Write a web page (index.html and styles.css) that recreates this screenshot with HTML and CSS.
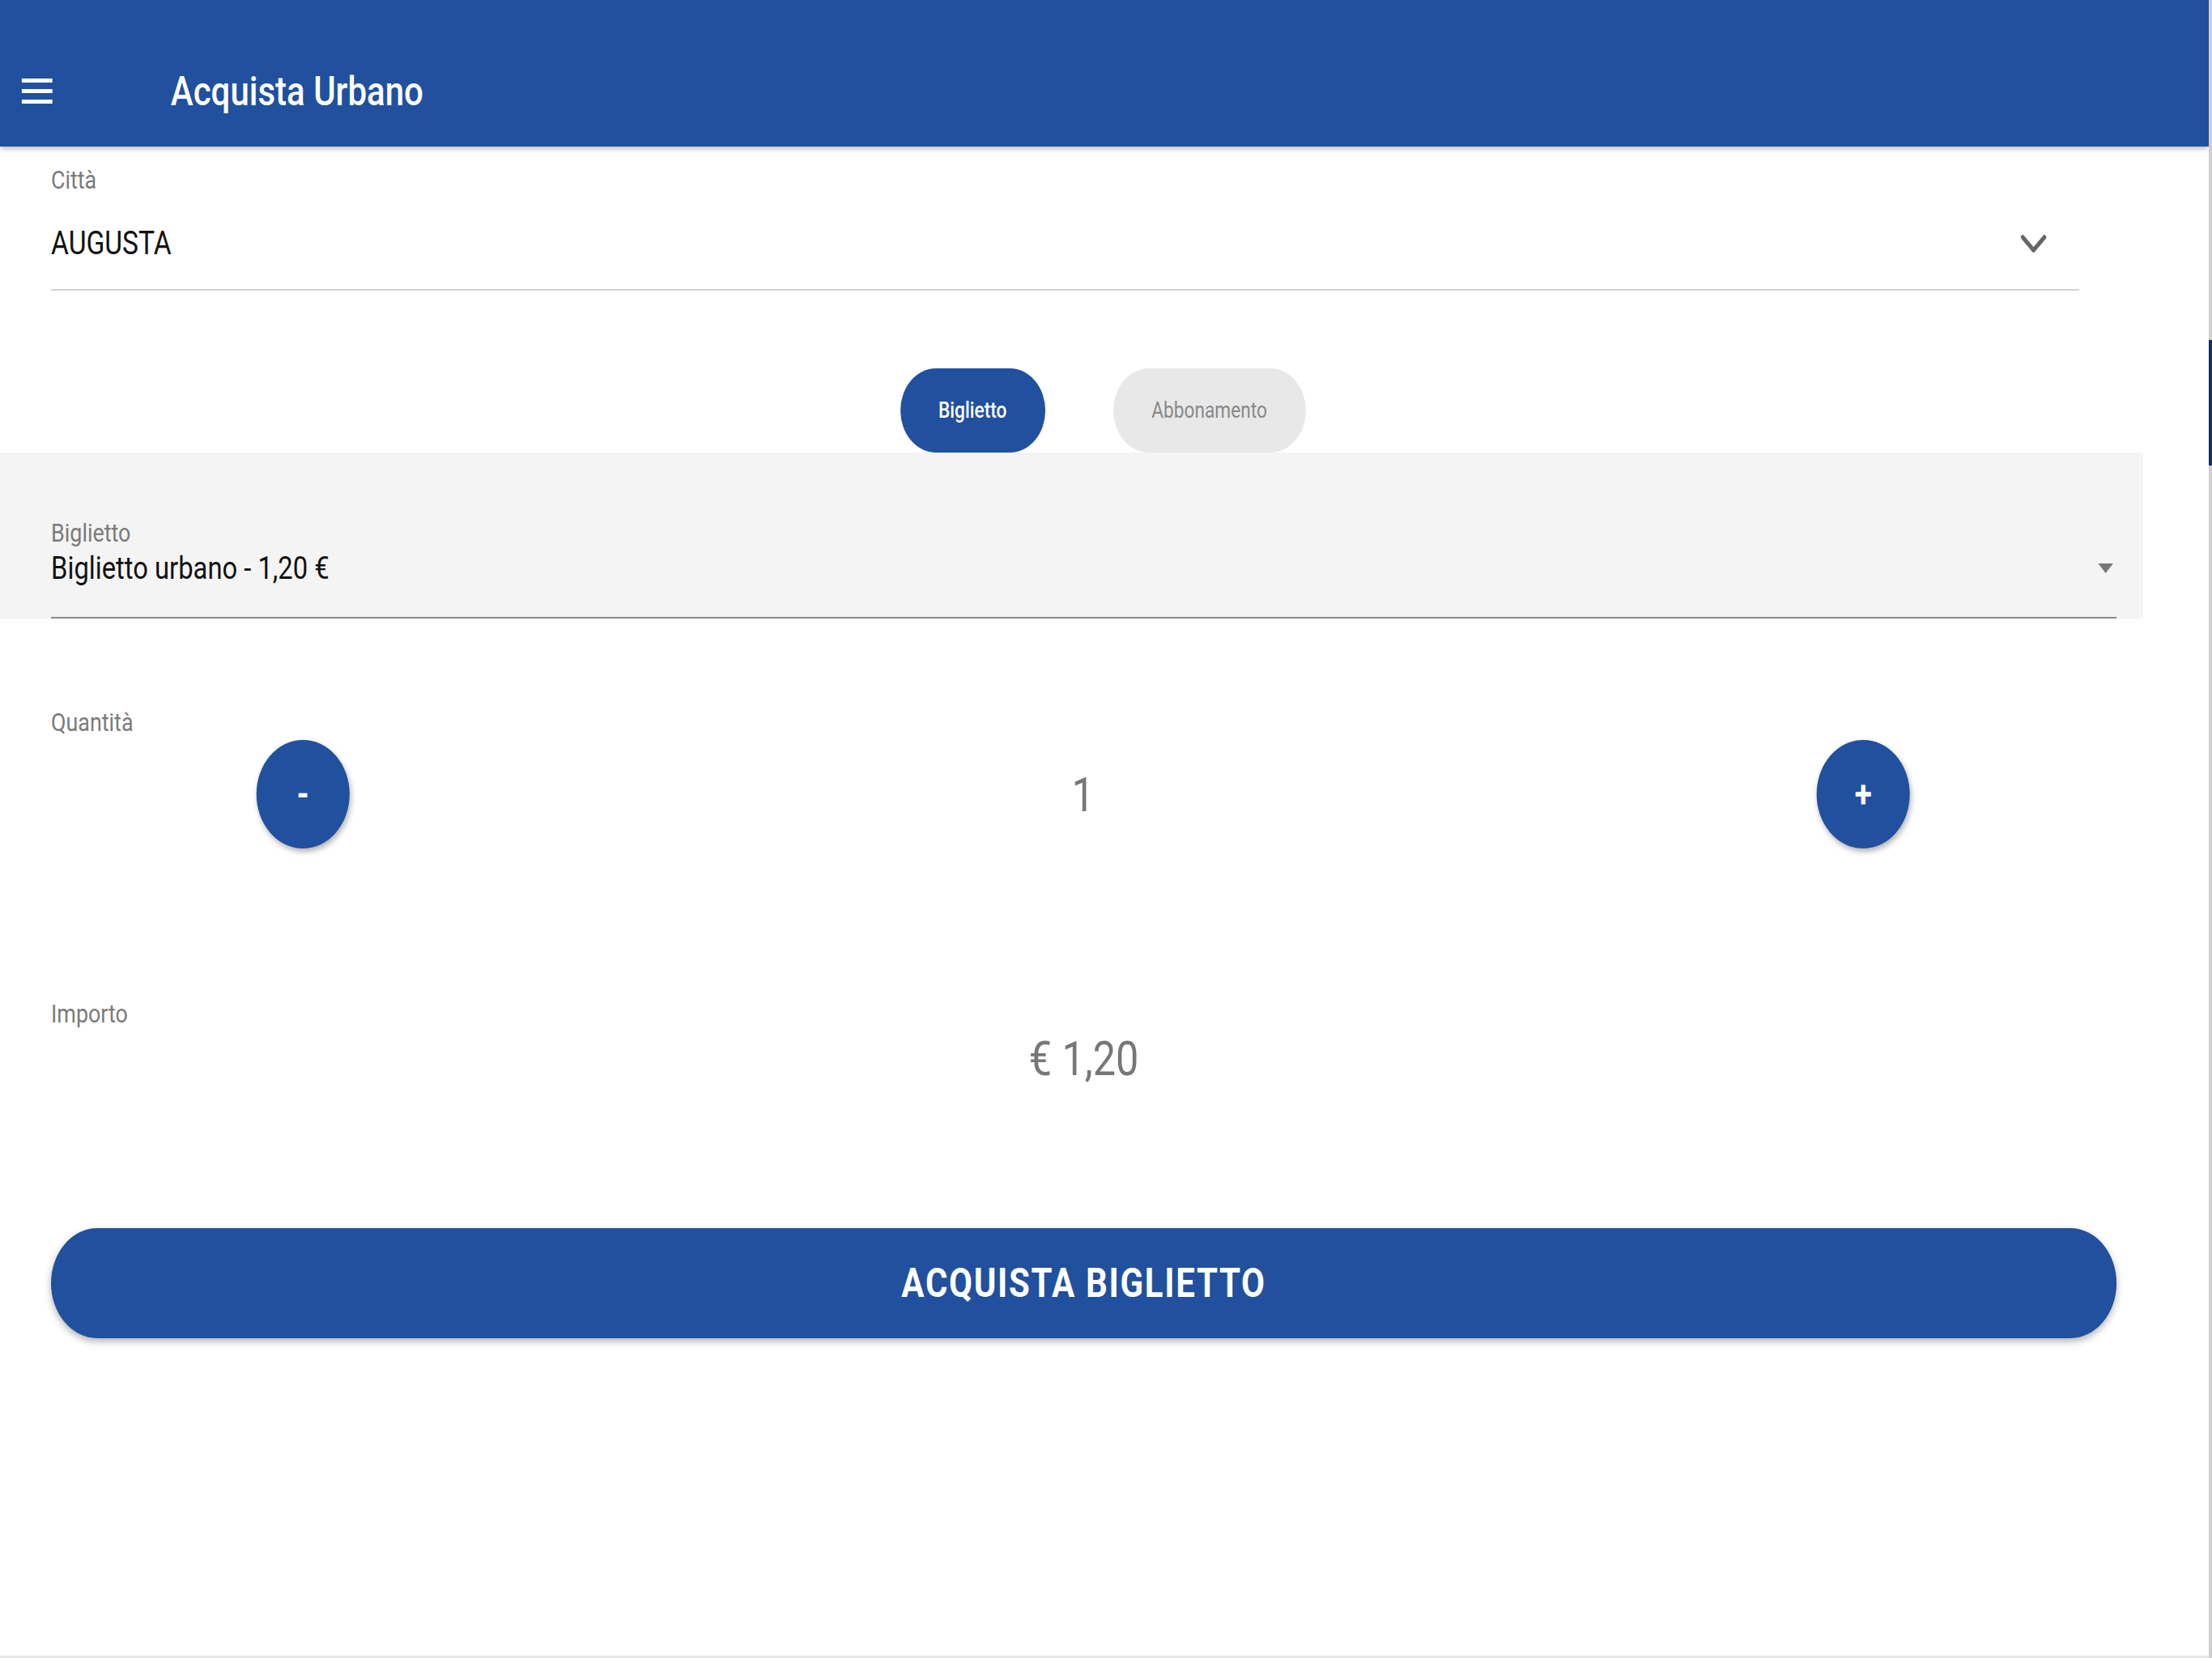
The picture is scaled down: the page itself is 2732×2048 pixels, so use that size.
FILE: index.html
```html
<!DOCTYPE html>
<html lang="it">
<head>
<meta charset="utf-8">
<title>Acquista Urbano</title>
<link rel="stylesheet" href="styles.css">
</head>
<body>
<div class="frame">
  <div class="viewport">
    <div class="stage">
      <header class="toolbar">
        <button class="menu-btn" aria-label="Menu"><span></span><span></span><span></span></button>
        <h1 class="title">Acquista Urbano</h1>
      </header>
      <main class="content">
        <div class="field city">
          <div class="label">Città</div>
          <div class="value-row">
            <span class="value">AUGUSTA</span>
            <svg class="chevron" viewBox="0 0 40 24" aria-hidden="true"><polyline points="4,4 20,20 36,4" fill="none" stroke="#666666" stroke-width="5.5" stroke-linecap="round" stroke-linejoin="round"/></svg>
          </div>
        </div>
        <div class="segment">
          <button class="seg active">Biglietto</button>
          <button class="seg">Abbonamento</button>
        </div>
        <div class="select-band">
          <div class="field select">
            <div class="label">Biglietto</div>
            <div class="value-row">
              <span class="value">Biglietto urbano - 1,20 €</span>
              <span class="caret"></span>
            </div>
          </div>
        </div>
        <div class="qty">
          <div class="label">Quantità</div>
          <div class="stepper">
            <button class="round">-</button>
            <span class="count">1</span>
            <button class="round">+</button>
          </div>
        </div>
        <div class="amount">
          <div class="label">Importo</div>
          <div class="amount-value">€ 1,20</div>
        </div>
        <button class="buy">ACQUISTA BIGLIETTO</button>
      </main>
    </div>
  </div>
  <div class="scrollbar"><div class="thumb"></div></div>
</div>
</body>
</html>
```
FILE: styles.css
```css
html, body {
  margin: 0;
  padding: 0;
}
body {
  width: 2732px;
  height: 2048px;
  overflow: hidden;
  background: #ffffff;
  font-family: Roboto, "Noto Sans", sans-serif;
}
button {
  font-family: inherit;
  cursor: pointer;
}
.frame {
  display: flex;
  height: 2048px;
}
.viewport {
  width: 2728px;
  height: 2048px;
  overflow: hidden;
  box-sizing: border-box;
  border-bottom: 3px solid #e6e6e6;
}
.stage {
  width: 3248px;
  transform: scaleX(0.84);
  transform-origin: 0 0;
}
.scrollbar {
  width: 4px;
  background: #cfcfcf;
  padding-top: 420px;
  box-sizing: border-box;
}
.thumb {
  height: 155px;
  background: #1c2f5a;
}

/* toolbar */
.toolbar {
  height: 181px;
  box-sizing: border-box;
  padding-top: 44px;
  background: #21509e;
  display: flex;
  align-items: center;
  box-shadow: 0 3px 6px rgba(0, 0, 0, 0.25);
}
.menu-btn {
  margin-left: 32px;
  width: 45px;
  padding: 0;
  border: 0;
  background: none;
  display: flex;
  flex-direction: column;
  gap: 8px;
}
.menu-btn span {
  display: block;
  height: 5px;
  background: #ffffff;
}
.title {
  margin: 0 0 0 174px;
  font-size: 50px;
  font-weight: 500;
  color: #ffffff;
}

/* content */
.content {
  padding: 0 136px 0 75px;
}
.label {
  font-size: 32px;
  line-height: 36px;
  color: #7b7b7b;
}
.value {
  font-size: 40px;
  line-height: 48px;
  color: #111111;
}
.value-row {
  display: flex;
  align-items: center;
  justify-content: space-between;
}
.city {
  margin-right: 55px;
  padding-top: 23px;
  padding-bottom: 32px;
  border-bottom: 2px solid #d2d2d2;
}
.city .value-row {
  margin-top: 37px;
}
.chevron {
  width: 40px;
  height: 24px;
  margin-right: 47px;
}

.segment {
  margin-top: 96px;
  padding-left: 56px;
  display: flex;
  justify-content: center;
  gap: 100px;
}
.seg {
  height: 104px;
  border: 0;
  border-radius: 52px;
  font-size: 27px;
  padding: 0;
  background: #e8e8e8;
  color: #888888;
  width: 283px;
}
.seg.active {
  width: 213px;
  background: #21509e;
  color: #ffffff;
  font-weight: 500;
}

.select-band {
  margin: 0 -39px 0 -75px;
  padding: 81px 39px 0 75px;
  background: #f4f4f4;
}
.select .value-row {
  margin-top: 2px;
  padding-bottom: 36px;
  border-bottom: 2px solid #8a8a8a;
}
.select .value {
  font-size: 39px;
}
.caret {
  width: 0;
  height: 0;
  border-left: 11px solid transparent;
  border-right: 11px solid transparent;
  border-top: 12px solid #777777;
  margin-right: 5px;
}

.qty {
  margin-top: 110px;
}
.stepper {
  margin-top: 4px;
  height: 134px;
  padding: 0 304px 0 302px;
  display: flex;
  align-items: center;
  justify-content: space-between;
}
.round {
  width: 137px;
  height: 134px;
  border: 0;
  border-radius: 50%;
  padding: 0;
  background: #21509e;
  color: #ffffff;
  font-size: 46px;
  font-weight: 700;
  box-shadow: 2px 4px 8px rgba(0, 0, 0, 0.3);
}
.count {
  font-size: 60px;
  color: #777777;
}

.amount {
  margin-top: 186px;
}
.amount-value {
  margin-top: 2px;
  text-align: center;
  font-size: 60px;
  line-height: 72px;
  color: #777777;
}

.buy {
  display: block;
  width: 100%;
  height: 136px;
  margin-top: 173px;
  border: 0;
  border-radius: 68px;
  background: #21509e;
  color: #ffffff;
  font-size: 50px;
  font-weight: 700;
  letter-spacing: 2px;
  box-shadow: 0 4px 10px rgba(0, 0, 0, 0.3);
}
```
